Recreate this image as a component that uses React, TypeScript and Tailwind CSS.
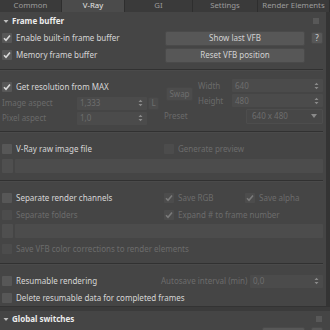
import React from "react";

const tabs = [
  { label: "Common", w: "w-[62px]" },
  { label: "V-Ray", w: "w-[63px]", active: true },
  { label: "GI", w: "w-[68px]" },
  { label: "Settings", w: "w-[65px]" },
  { label: "Render Elements", w: "flex-1" },
];

const Check = ({ checked, disabled }: { checked?: boolean; disabled?: boolean }) => (
  <span
    className={`flex h-[10px] w-[10px] shrink-0 items-center justify-center rounded-[1px] ${
      disabled ? "bg-[#4c4c4c]" : "bg-[#575757]"
    }`}
  >
    {checked && (
      <svg width="8" height="8" viewBox="0 0 8 8">
        <path
          d="M1 4.2 L3 6.3 L7 1.5"
          fill="none"
          stroke={disabled ? "#7a7a7a" : "#dadada"}
          strokeWidth="1.6"
        />
      </svg>
    )}
  </span>
);

const CheckRow = ({
  label,
  checked,
  disabled,
  className = "",
}: {
  label: string;
  checked?: boolean;
  disabled?: boolean;
  className?: string;
}) => (
  <div className={`flex items-center gap-[4px] whitespace-nowrap ${className}`}>
    <Check checked={checked} disabled={disabled} />
    <span className={disabled ? "text-[#6c6c6c]" : "text-[#d6d6d6]"}>{label}</span>
  </div>
);

const Arrows = () => (
  <svg width="5" height="8" viewBox="0 0 5 8" className="shrink-0">
    <path d="M0.5 3 L2.5 0.8 L4.5 3 Z M0.5 5 L2.5 7.2 L4.5 5 Z" fill="#8a8a8a" />
  </svg>
);

const Spinner = ({ value, className = "" }: { value: string; className?: string }) => (
  <div
    className={`flex h-[13px] items-center justify-between rounded-[1px] bg-[#4b4b4b] pl-[3px] pr-[4px] text-[#6e6e6e] ${className}`}
  >
    <span>{value}</span>
    <Arrows />
  </div>
);

const Button = ({
  label,
  className = "",
  disabled,
}: {
  label: string;
  className?: string;
  disabled?: boolean;
}) => (
  <div
    className={`flex items-center justify-center rounded-[2px] border ${
      disabled
        ? "border-[#474747] bg-[#4c4c4c] text-[#6e6e6e]"
        : "border-[#4a4a4a] bg-[#575757] text-[#d2d2d2]"
    } ${className}`}
  >
    {label}
  </div>
);

const Separator = ({ className = "" }: { className?: string }) => (
  <div className={`h-[2px] border-t border-[#313131] border-b border-b-[#4a4a4a] ${className}`} />
);

const FileRow = ({ className = "" }: { className?: string }) => (
  <div className={`flex h-[14px] items-stretch gap-[2px] pl-[2px] ${className}`}>
    <div className="w-[11px] rounded-[1px] bg-[#4f4f4f]" />
    <div className="flex-1 rounded-[1px] bg-[#4c4c4c]" />
  </div>
);

const Header = ({ label, className = "" }: { label: string; className?: string }) => (
  <div className={`flex items-center pl-[3px] pr-[4px] ${className}`}>
    <svg width="6" height="5" viewBox="0 0 6 5" className="mr-[3px]">
      <path d="M0.5 1 L5.5 1 L3 4 Z" fill="#bdbdbd" />
    </svg>
    <span className="text-[8px] font-bold text-[#ececec]">{label}</span>
    <span className="ml-auto h-[6px] w-[6px] bg-[#585858]" />
  </div>
);

export default function App() {
  return (
    <div className="flex h-[330px] w-[330px] flex-col overflow-hidden bg-[#454545] font-['Noto_Sans',sans-serif] text-[8px] leading-none">
      {/* tabs */}
      <div className="flex h-[12px] shrink-0 bg-[#3a3a3a]">
        {tabs.map((t) => (
          <div
            key={t.label}
            className={`${t.w} flex items-center justify-center overflow-hidden whitespace-nowrap border-r border-[#2e2e2e] ${
              t.active ? "bg-[#4b4b4b] text-[#e4e4e4]" : "text-[#9c9c9c]"
            }`}
          >
            <span className="-mt-[1px] text-[7.8px]">{t.label}</span>
          </div>
        ))}
      </div>

      <div className="flex flex-1">
        <div className="flex flex-1 flex-col pr-[3px]">
          <Header label="Frame buffer" className="h-[18px]" />

          <div className="flex h-[16px] items-center">
            <CheckRow label="Enable built-in frame buffer" checked className="w-[165px] pl-[2px]" />
            <Button label="Show last VFB" className="h-[15px] w-[140px]" />
            <Button label="?" className="ml-[6px] h-[12px] w-[12px]" />
          </div>
          <div className="mt-[1px] flex h-[16px] items-center">
            <CheckRow label="Memory frame buffer" checked className="w-[165px] pl-[2px]" />
            <Button label="Reset VFB position" className="h-[15px] w-[140px]" />
          </div>

          <Separator className="mt-[6px]" />

          {/* resolution */}
          <div className="mt-[8px] flex">
            <div className="flex w-[164px] flex-col">
              <div className="flex h-[16px] items-center">
                <CheckRow label="Get resolution from MAX" checked className="pl-[2px]" />
              </div>
              <div className="flex h-[16px] items-center">
                <span className="w-[77px] pl-[2px] text-[#6a6a6a]">Image aspect</span>
                <Spinner value="1,333" className="w-[70px]" />
                <Button label="L" disabled className="ml-[1px] h-[13px] w-[11px]" />
              </div>
              <div className="flex h-[14px] items-center">
                <span className="w-[77px] pl-[2px] text-[#6a6a6a]">Pixel aspect</span>
                <Spinner value="1,0" className="w-[70px]" />
              </div>
            </div>
            <div className="flex flex-1 flex-col">
              <div className="flex h-[29px]">
                <div className="flex items-center">
                  <Button label="Swap" disabled className="ml-[2px] h-[14px] w-[27px]" />
                </div>
                <div className="ml-[5px] flex flex-1 flex-col gap-[2px]">
                  <div className="flex h-[13px] items-center">
                    <span className="w-[34px] text-[#6a6a6a]">Width</span>
                    <Spinner value="640" className="flex-1" />
                  </div>
                  <div className="flex h-[13px] items-center">
                    <span className="w-[34px] text-[#6a6a6a]">Height</span>
                    <Spinner value="480" className="flex-1" />
                  </div>
                </div>
              </div>
              <div className="flex h-[16px] items-center">
                <span className="w-[82px] text-[#6a6a6a]">Preset</span>
                <div className="flex h-[15px] flex-1 items-center justify-between rounded-[1px] border border-[#4d4d4d] bg-[#474747] pl-[5px] pr-[5px] text-[#6e6e6e]">
                  <span>640 x 480</span>
                  <svg width="6" height="4" viewBox="0 0 6 4">
                    <path d="M0 0 L6 0 L3 4 Z" fill="#8a8a8a" />
                  </svg>
                </div>
              </div>
            </div>
          </div>

          <Separator className="mt-[6px]" />

          {/* raw image */}
          <div className="mt-[8px] flex h-[16px] items-center">
            <CheckRow label="V-Ray raw image file" className="w-[164px] pl-[2px]" />
            <CheckRow label="Generate preview" disabled />
          </div>
          <FileRow className="mt-[2px]" />

          <Separator className="mt-[7px]" />

          {/* render channels */}
          <div className="mt-[8px] flex h-[16px] items-center">
            <CheckRow label="Separate render channels" className="w-[164px] pl-[2px]" />
            <CheckRow label="Save RGB" checked disabled className="w-[81px]" />
            <CheckRow label="Save alpha" checked disabled />
          </div>
          <div className="mt-[1px] flex h-[16px] items-center">
            <CheckRow label="Separate folders" disabled className="w-[164px] pl-[2px]" />
            <CheckRow label="Expand # to frame number" checked disabled />
          </div>
          <FileRow className="mt-[1px]" />
          <div className="mt-[3px] flex h-[16px] items-center">
            <CheckRow label="Save VFB color corrections to render elements" disabled className="pl-[2px]" />
          </div>

          <Separator className="mt-[6px]" />

          {/* resumable */}
          <div className="mt-[8px] flex h-[16px] items-center">
            <CheckRow label="Resumable rendering" className="w-[161px] pl-[2px]" />
            <span className="w-[89px] whitespace-nowrap text-[#6c6c6c]">Autosave interval (min)</span>
            <Spinner value="0,0" className="flex-1" />
          </div>
          <div className="mt-[1px] flex h-[16px] items-center">
            <CheckRow label="Delete resumable data for completed frames" className="pl-[2px]" />
          </div>
        </div>
        <div className="w-[4px] bg-[#343434]" />
      </div>

      {/* rollout gap */}
      <div className="h-[5px] shrink-0 border-t border-[#333333] bg-[#3b3b3b]" />
      <div className="flex shrink-0 flex-col">
        <Header label="Global switches" className="h-[16px] pr-[8px]" />
        <div className="flex h-[4px] gap-[6px] pl-[262px] pr-[7px]">
          <div className="w-[43px] rounded-t-[2px] border border-[#4a4a4a] bg-[#575757]" />
          <div className="w-[12px] rounded-t-[2px] border border-[#4a4a4a] bg-[#575757]" />
        </div>
      </div>
    </div>
  );
}
